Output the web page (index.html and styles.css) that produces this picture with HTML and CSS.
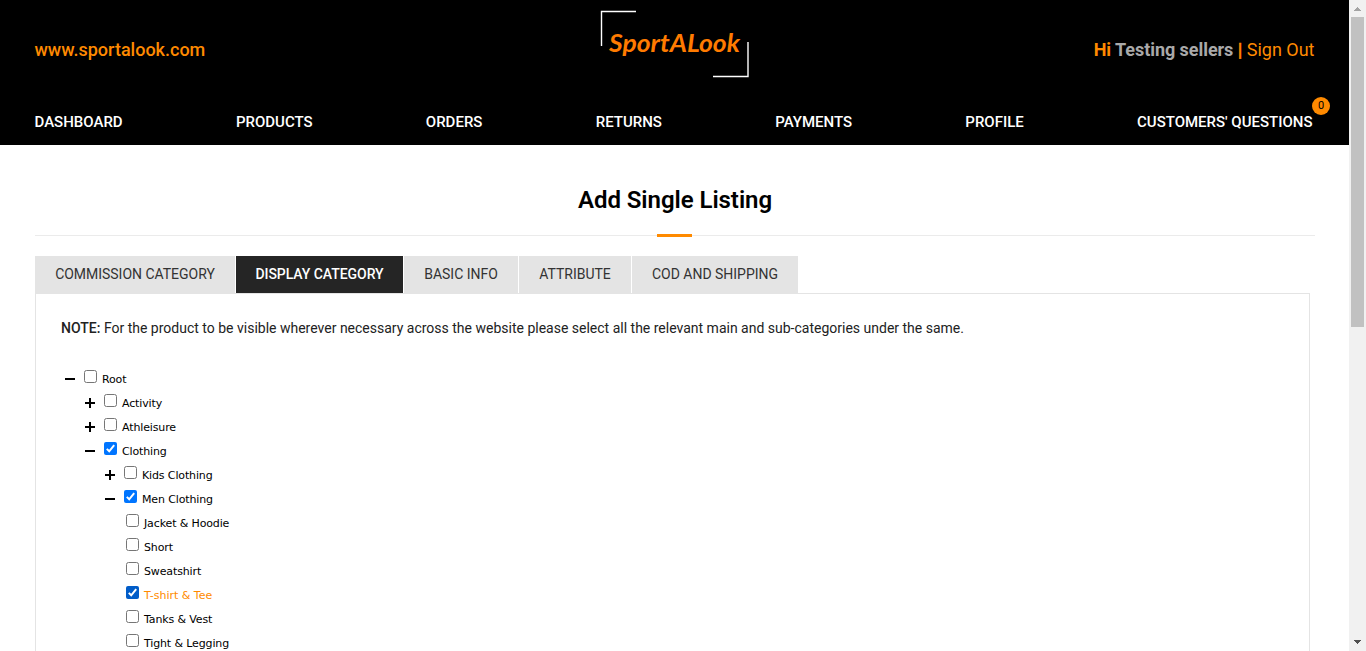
FILE: index.html
```html
<!DOCTYPE html>
<html lang="en">
<head>
<meta charset="utf-8">
<title>Add Single Listing</title>
<link rel="stylesheet" href="styles.css">
</head>
<body>
<svg class="defs" width="0" height="0">
  <symbol id="plus" viewBox="0 0 10 10"><path d="M0 4h4V0h2v4h4v2H6v4H4V6H0z"/></symbol>
  <symbol id="minus" viewBox="0 0 10 10"><path d="M0 4h10v2H0z"/></symbol>
  <symbol id="box" viewBox="0 0 13 13"><rect x=".5" y=".5" width="12" height="12" rx="2" fill="#fff" stroke="#767676"/></symbol>
  <symbol id="checked" viewBox="0 0 13 13"><rect width="13" height="13" rx="2" fill="currentColor"/><path d="M2.8 6.9 5.2 9.3 10.2 3.2" fill="none" stroke="#fff" stroke-width="2"/></symbol>
</svg>
<div class="window">
  <div class="page">
    <header class="header">
      <div class="topbar">
        <a class="site">www.sportalook.com</a>
        <svg class="logo" width="150" height="70" viewBox="0 0 150 70">
          <path d="M1.500 36V1.500H36M148 32V66.500H113" fill="none" stroke="#fff" stroke-width="1.400"/>
          <text x="9" y="42" textLength="131" lengthAdjust="spacingAndGlyphs">SportALook</text>
        </svg>
        <div class="user"><b>Hi <span class="name">Testing sellers</span> <span class="bar">|</span></b> <a>Sign Out</a></div>
      </div>
      <nav class="nav">
        <a>DASHBOARD</a><a>PRODUCTS</a><a>ORDERS</a><a>RETURNS</a><a>PAYMENTS</a><a>PROFILE</a>
        <a class="questions">CUSTOMERS' QUESTIONS<span class="badge">0</span></a>
      </nav>
    </header>
    <main class="main">
      <h1 class="title">Add Single Listing</h1>
      <div class="tabs">
        <div class="tab t1">COMMISSION CATEGORY</div>
        <div class="tab t2 active">DISPLAY CATEGORY</div>
        <div class="tab t3">BASIC INFO</div>
        <div class="tab t4">ATTRIBUTE</div>
        <div class="tab t5">COD AND SHIPPING</div>
      </div>
      <section class="panel">
        <p class="note"><b>NOTE:</b> <span>For the product to be visible wherever necessary across the website please select all the relevant main and sub-categories under the same.</span></p>
        <ul class="tree">
          <li class="row"><svg class="toggle"><use href="#minus"/></svg><svg class="check"><use href="#box"/></svg><span>Root</span></li>
          <li class="row l1"><svg class="toggle"><use href="#plus"/></svg><svg class="check"><use href="#box"/></svg><span>Activity</span></li>
          <li class="row l1"><svg class="toggle"><use href="#plus"/></svg><svg class="check"><use href="#box"/></svg><span>Athleisure</span></li>
          <li class="row l1"><svg class="toggle"><use href="#minus"/></svg><svg class="check"><use href="#checked"/></svg><span>Clothing</span></li>
          <li class="row l2"><svg class="toggle"><use href="#plus"/></svg><svg class="check"><use href="#box"/></svg><span>Kids Clothing</span></li>
          <li class="row l2"><svg class="toggle"><use href="#minus"/></svg><svg class="check"><use href="#checked"/></svg><span>Men Clothing</span></li>
          <li class="row leaf"><svg class="check"><use href="#box"/></svg><span>Jacket &amp; Hoodie</span></li>
          <li class="row leaf"><svg class="check"><use href="#box"/></svg><span>Short</span></li>
          <li class="row leaf"><svg class="check"><use href="#box"/></svg><span>Sweatshirt</span></li>
          <li class="row leaf selected"><svg class="check"><use href="#checked"/></svg><span>T-shirt &amp; Tee</span></li>
          <li class="row leaf"><svg class="check"><use href="#box"/></svg><span>Tanks &amp; Vest</span></li>
          <li class="row leaf"><svg class="check"><use href="#box"/></svg><span>Tight &amp; Legging</span></li>
        </ul>
      </section>
    </main>
  </div>
  <div class="scrollbar">
    <svg class="arrow" width="7" height="4" shape-rendering="crispEdges"><path d="M3 0h1v1h1v1h1v1h1v1H0V3h1V2h1V1h1z" fill="#a3a3a3"/></svg>
    <div class="thumb"></div>
    <svg class="arrow down" width="7" height="4" shape-rendering="crispEdges"><path d="M0 0h7v1H6v1H5v1H4v1H3V3H2V2H1V1H0z" fill="#505050"/></svg>
  </div>
</div>
</body>
</html>
```
FILE: styles.css
```css
* { box-sizing: border-box; }
body { margin: 0; background: #fff; font-family: Roboto, sans-serif; overflow: hidden; }
.defs { display: block; }
.window { display: flex; height: 651px; overflow: hidden; }
.page { flex: 1; min-width: 0; height: 651px; overflow: hidden; }
.header { height: 145px; background: #000; }
.topbar { height: 99px; padding: 0 34.500px 0 34.500px; display: grid; grid-template-columns: 1fr 150px 1fr; }
.site { color: #ff8a00; font-size: 18px; font-weight: 500; line-height: 99px; }
.logo { margin-top: 10px; }
.logo text { font: italic 700 24px Lato, sans-serif; fill: #ff7b00; }
.user { color: #ff8a00; font-size: 18px; line-height: 99px; text-align: right; white-space: nowrap; }
.user b { font-weight: 700; letter-spacing: -0.05px; }
.user .name { color: #a9a9a9; }
.bar { -webkit-text-stroke: 0.5px #ff8a00; }
.nav { display: flex; justify-content: space-between; padding: 0 36.500px 0 34.500px; color: #fff; font-size: 15px; font-weight: 500; line-height: 46px; }
.questions { position: relative; }
.badge { position: absolute; right: -17.500px; top: -2px; width: 18px; height: 18px; border-radius: 9px; background: #ff8a00; color: #000; font-size: 11px; font-weight: 400; line-height: 18px; text-align: center; }
.main { padding: 0 34px 0 35px; }
.title { position: relative; margin: 0 0 20px; height: 91px; padding-top: 40px; border-bottom: 1px solid #ebebeb; font-size: 24px; font-weight: 600; letter-spacing: -0.05px; line-height: 30px; text-align: center; color: #000; }
.title::after { content: ""; position: absolute; left: 622px; bottom: -2px; width: 35px; height: 3px; background: #ff8a00; }
.tabs { display: flex; gap: 1px; height: 37px; }
.tab { background: #e4e4e4; color: #333; font-size: 14px; line-height: 37px; letter-spacing: -0.02px; text-align: center; white-space: nowrap; }
.t1 { width: 200px; }
.t2 { width: 167px; }
.t3 { width: 114px; }
.t4 { width: 112px; }
.t5 { width: 166px; }
.active { background: #252525; color: #fff; font-weight: 500; letter-spacing: -0.05px; }
.panel { width: 1275px; height: 500px; border: 1px solid #e4e4e4; padding: 24px 25px 0; }
.note { margin: 0; height: 49px; color: #222; font-size: 14px; line-height: 20px; white-space: nowrap; }
.note b { font-weight: 500; }
.tree { margin: 0; padding: 0 0 0 4px; list-style: none; color: #000; font: 11px "DejaVu Sans", sans-serif; letter-spacing: -0.13px; }
.row { display: flex; height: 24px; }
.l1 { padding-left: 20px; }
.l2 { padding-left: 40px; }
.leaf { padding-left: 61px; }
.toggle { width: 10px; height: 10px; margin: 7px 9px 0 0; }
.check { width: 13px; height: 13px; margin: 3px 5px 0 0; color: #0075ff; }
.row span { line-height: 26px; white-space: nowrap; }
.selected { color: #ff8a00; letter-spacing: 0; }
.selected .check { color: #005cc8; }
.scrollbar { width: 17px; height: 651px; background: #f1f1f1; display: flex; flex-direction: column; align-items: center; }
.arrow { display: block; margin: 7px 0 6px; }
.thumb { width: 13px; height: 310px; background: #c1c1c1; }
.down { margin: auto 0 7px; }
```
